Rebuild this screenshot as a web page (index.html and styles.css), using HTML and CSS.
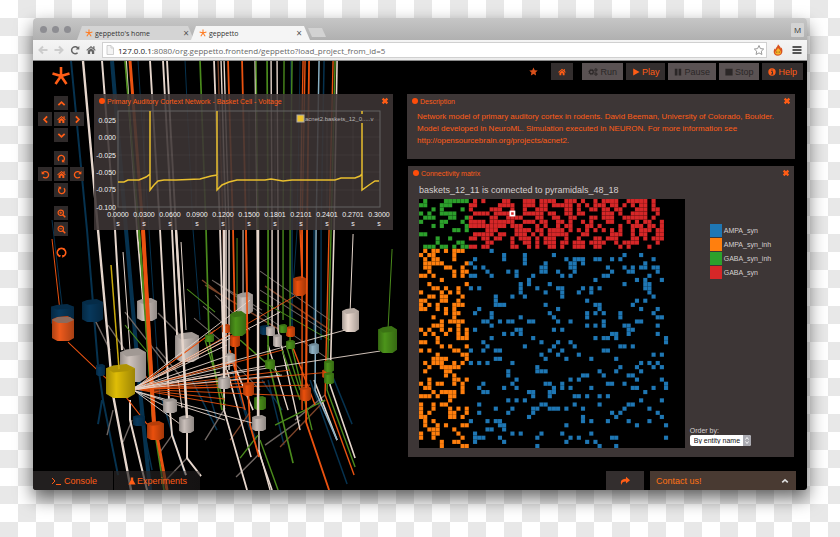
FILE: index.html
```html
<!DOCTYPE html>
<html lang="en">
<head>
<meta charset="utf-8">
<title>geppetto</title>
<link rel="stylesheet" href="styles.css">
</head>
<body>
<svg class="defs" aria-hidden="true">
  <defs>
    <linearGradient id="shade" x1="0" x2="1" y1="0" y2="0">
      <stop offset="0" stop-color="#000" stop-opacity=".28"/>
      <stop offset=".35" stop-color="#000" stop-opacity="0"/>
      <stop offset="1" stop-color="#000" stop-opacity=".3"/>
    </linearGradient>
    <symbol id="soma" viewBox="0 0 20 24" preserveAspectRatio="none">
      <path d="M0 3V21L5 24H15L20 21V3Z" fill="currentColor"/>
      <path d="M0 3V21L5 24H15L20 21V3Z" fill="url(#shade)"/>
      <path d="M0 3L5 1L14 0L20 3L15 5L5 6Z" fill="currentColor"/>
      <path d="M0 3L5 1L14 0L20 3L15 5L5 6Z" fill="#000" opacity=".22"/>
    </symbol>
    <symbol id="aster" viewBox="0 0 20 20">
      <path d="M10 10V1M10 10L1.500 7.500M10 10L18.500 7.500M10 10L4.500 18M10 10L15.500 18" stroke="currentColor" stroke-width="2.600" fill="none"/>
    </symbol>
    <symbol id="up" viewBox="0 0 10 10"><path d="M1.500 6.800L5 3.500L8.500 6.800" class="stroke"/></symbol>
    <symbol id="down" viewBox="0 0 10 10"><path d="M1.500 3.200L5 6.500L8.500 3.200" class="stroke"/></symbol>
    <symbol id="left" viewBox="0 0 10 10"><path d="M6.800 1.500L3.500 5L6.800 8.500" class="stroke"/></symbol>
    <symbol id="right" viewBox="0 0 10 10"><path d="M3.200 1.500L6.500 5L3.200 8.500" class="stroke"/></symbol>
    <symbol id="home" viewBox="0 0 10 10"><path d="M5 1L9.700 5L9 5.800L5 2.500L1 5.800L.3 5Z M7.200 1.300H8.500V4L7.200 2.800Z M1.800 5.800L5 3.200L8.200 5.800V9H5.900V6.500H4.100V9H1.800Z" fill="currentColor"/></symbol>
    <symbol id="turn" viewBox="0 0 10 10"><path d="M7.600 7.700A3.500 3.500 0 1 1 8 3.300" fill="none" stroke="currentColor" stroke-width="1.500"/><path d="M9.300 1V4.600H5.700Z" fill="currentColor"/></symbol>
    <symbol id="zin" viewBox="0 0 10 10"><circle cx="4.200" cy="4.200" r="3" fill="none" stroke="currentColor" stroke-width="1.300"/><path d="M6.400 6.400L9.200 9.200" stroke="currentColor" stroke-width="1.700"/><path d="M2.600 4.200H5.800M4.200 2.600V5.800" stroke="currentColor" stroke-width=".9"/></symbol>
    <symbol id="zout" viewBox="0 0 10 10"><circle cx="4.200" cy="4.200" r="3" fill="none" stroke="currentColor" stroke-width="1.300"/><path d="M6.400 6.400L9.200 9.200" stroke="currentColor" stroke-width="1.700"/><path d="M2.600 4.200H5.800" stroke="currentColor" stroke-width=".9"/></symbol>
    <symbol id="cross" viewBox="0 0 10 10"><path d="M2 2L8 8M8 2L2 8" stroke="currentColor" stroke-width="2.800"/></symbol>
    <symbol id="star" viewBox="0 0 10 10"><path d="M5 .5L6.400 3.600L9.700 4L7.300 6.200L7.900 9.500L5 7.900L2.100 9.500L2.700 6.200L.3 4L3.600 3.600Z"/></symbol>
    <symbol id="gears" viewBox="0 0 12 10">
      <circle cx="4" cy="5" r="2.300" fill="none" stroke="currentColor" stroke-width="1.500"/>
      <circle cx="4" cy="5" r="3.400" fill="none" stroke="currentColor" stroke-width="1" stroke-dasharray="1.300 1.370"/>
      <circle cx="9.600" cy="2.400" r="1.200" fill="none" stroke="currentColor" stroke-width="1.100"/>
      <circle cx="9.600" cy="7.600" r="1.200" fill="none" stroke="currentColor" stroke-width="1.100"/>
      <circle cx="9.600" cy="2.400" r="2" fill="none" stroke="currentColor" stroke-width=".7" stroke-dasharray=".8 .77"/>
      <circle cx="9.600" cy="7.600" r="2" fill="none" stroke="currentColor" stroke-width=".7" stroke-dasharray=".8 .77"/>
    </symbol>
    <symbol id="github" viewBox="0 0 12 12"><path d="M4.400 10.400A4.600 4.600 0 1 1 7.600 10.400V8.600" fill="none" stroke="currentColor" stroke-width="1.700"/><path d="M4.400 10.400V8.600M4.400 9.400H3.200L2.200 8" fill="none" stroke="currentColor" stroke-width="1.200"/><path d="M2.300 4.400V1.300L4.800 2.500ZM9.700 4.400V1.300L7.200 2.500Z" fill="currentColor"/></symbol>
  </defs>
</svg>

<div class="window">
  <header class="titlebar">
    <div class="lights"><i></i><i></i><i></i></div>
    <div class="tab"><svg><use href="#aster"/></svg><span>geppetto's home</span><button aria-label="Close tab">×</button></div>
    <div class="tab active"><svg><use href="#aster"/></svg><span>geppetto</span><button aria-label="Close tab">×</button></div>
    <button class="newtab" aria-label="New tab"></button>
    <button class="profile">M</button>
  </header>
  <nav class="toolbar">
    <button class="dim" aria-label="Back"><svg viewBox="0 0 10 10"><path d="M9.500 5H1.500M5 1.500L1.500 5L5 8.500" class="stroke"/></svg></button>
    <button class="dim" aria-label="Forward"><svg viewBox="0 0 10 10"><path d="M.5 5H8.500M5 1.500L8.500 5L5 8.500" class="stroke"/></svg></button>
    <button aria-label="Reload"><svg><use href="#turn"/></svg></button>
    <button aria-label="Home"><svg><use href="#home"/></svg></button>
    <div class="omnibox">
      <svg class="page" viewBox="0 0 8 10"><path d="M1 .5H5L7.500 3V9.500H1ZM5 .5V3H7.500" fill="#f4f4f4" stroke="#c4c4c4" stroke-width=".8"/></svg>
      <p><b>127.0.0.1</b>:8080/org.geppetto.frontend/geppetto?load_project_from_id=5</p>
      <svg class="mark"><use href="#star"/></svg>
    </div>
    <svg class="flame" viewBox="0 0 10 12"><path d="M5 .3C6 2 8 3 7.800 4.500L8.600 3.600C10.300 7 9.500 11.500 5 11.700C.5 11.500-.2 7.500 1.600 4.500L2.400 5.500C2.800 3.500 4.800 2.500 5 .3Z" fill="#d9521e"/><path d="M5 4C7 6 8.300 7 7.800 9C7.300 11 2.700 11 2.200 9C1.900 7.300 4 6.500 5 4Z" fill="#f7b52c"/><circle cx="3.800" cy="8" r=".6" fill="#503010"/><circle cx="6.200" cy="8" r=".6" fill="#503010"/></svg>
    <button class="menu" aria-label="Menu"><svg viewBox="0 0 10 10"><path d="M.5 2H9.500M.5 5H9.500M.5 8H9.500" stroke="#555" stroke-width="1.800"/></svg></button>
  </nav>

  <main class="app">
    <svg class="scene" viewBox="33 61 774 429" preserveAspectRatio="xMinYMin slice" aria-hidden="true">
      <g class="blue">
        <path d="M71 61L87 230L98 365L103 400L118 475M102 400L98 424" stroke-width="2"/>
        <path d="M112 61L126 230L139 380L150 490" stroke-width="4"/>
        <path d="M138 61L149 230L160 400M185 61L193 230L200 320M52 220L62 305M300 61L297 230L290 330"/>
        <path d="M162 400L185 475M205 380L217 420M140 410L152 470M232 370L250 430M268 380L284 445M310 380L347 484M262 380L282 410M330 370L352 424M314 230V330M192 380L217 430" stroke-width="1.500"/>
        <path d="M291 61L292 230V330M324 61L321 230V340M234 378L256 440" stroke-width="1.500"/>
      </g>
      <g class="grey">
        <path d="M93 316L110 350M108 325L125 350M125 312L170 370M158 313L180 335M156 347L182 378M113 410L107 435M132 420L123 442M225 408L205 440M258 455L236 477M172 435L160 452M188 457L166 480M325 395L295 420M300 420L265 445" stroke-width="1.400"/>
        <path d="M194 318L220 340M203 306L225 325M212 280L262 310M260 271L330 320M260 290L328 333M222 350L260 390M215 295L250 330M212 280L330 360"/>
      </g>
      <g class="brown"><path d="M218 61L223 230L226 380M265 286L330 330M202 280L225 298M205 285L280 330M230 440L250 412M280 447L325 400" stroke-width="1.400"/></g>
      <g class="white">
        <path d="M83 61L98 230L113 395L131 490" stroke-width="2.400"/>
        <path d="M102 61L115 230L122 350M130 400V420L147 490" stroke-width="2"/>
        <path d="M126 61L137 230L143 300M214 61L220 230L224 380V410L247 490" stroke-width="1.800"/>
        <path d="M150 61L160 230L169 400L172 435L186 475M163 61L172 230L177 335M167 61L176 230L187 420V458L201 476" stroke-width="1.900"/>
        <path d="M221 61L226 230V370M224 61L229 230V370M271 61L272 230V330M277 61L278 230V330L300 430M268 345L288 410M255 61L257 230L259 450L270 490" stroke-width="1.400"/>
        <path d="M337 61L334 230L330 385L355 458M227 370L251 457M232 360L253 410M258 450L272 490M314 380L337 440" stroke-width="1.600"/>
        <path d="M123 252L130 350M181 242L186 330M353 234L350 312M243 230V295M178 380L182 408"/>
      </g>
      <g class="green">
        <path d="M125 61L139 230L153 420L164 490M200 61L206 230L209 340L222 410M267 61L268 230V360L293 463" stroke-width="1.700"/>
        <path d="M256 61L258 230V350M284 61L283 230V320M292 61L290 230V340L312 430M335 61L331 230L327 390L355 467M260 440L278 490M240 340L280 375M205 340L225 405M286 345L300 390M325 400L275 425M258 435L240 458M282 350L300 400" stroke-width="1.400"/>
        <path d="M237 238V315M392 249L388 328M187 289L215 312M125 325L150 355M260 300L330 340"/>
      </g>
      <g class="orange">
        <path d="M130 61L143 230L154 420L167 490" stroke-width="3"/>
        <path d="M228 61L233 230L236 380M242 61L246 230L248 390L250 425L259 457M309 61L307 230L306 422L329 490" stroke-width="1.800"/>
        <path d="M303 61L300 230L302 280M305 61L302 230V410M333 61L329 230L325 395L354 475M290 340L315 405M230 350L245 410" stroke-width="1.400"/>
        <path d="M52 239L61 320M68 342L108 380M126 397L147 424M136 362L154 388"/>
      </g>
      <path class="ltblue" d="M319 61L316 230L315 390L337 440" stroke-width="1.500"/>

      <g color="#07385c">
        <use href="#soma" x="51" y="304" width="23" height="22"/><use href="#soma" x="82" y="299" width="21" height="23"/>
        <use href="#soma" x="96" y="364" width="9" height="12"/><use href="#soma" x="133" y="415" width="12" height="11"/>
        <use href="#soma" x="260" y="325" width="10" height="10"/>
      </g>
      <use href="#soma" x="52" y="316" width="22" height="25" color="#ee5a1c"/><path d="M52 320L58 317H70L74 320L67 323H58Z" fill="#8c6a5c"/>
      <g color="#cfc4be">
        <use href="#soma" x="137" y="298" width="20" height="23"/><use href="#soma" x="120" y="348" width="26" height="34"/>
        <use href="#soma" x="175" y="332" width="24" height="30"/><use href="#soma" x="237" y="292" width="16" height="22"/>
        <use href="#soma" x="266" y="326" width="9" height="10"/><use href="#soma" x="273" y="334" width="9" height="13"/>
        <use href="#soma" x="225" y="353" width="10" height="11"/>
        <use href="#soma" x="342" y="308" width="17" height="24" color="#eeddd2"/>
      </g>
      <path class="green" d="M139 230L153 420" stroke-width="2"/>
      <path class="orange" d="M143 230L154 425" stroke-width="4"/>
      <g class="orange" stroke-width=".9">
        <path d="M135 389L224 324M135 389L222 342M135 389L295 296M135 389L228 362M135 389L235 372M135 389L245 387M135 389L265 382M135 389L300 396M135 389L290 370M135 389L244 408M135 389L225 399M135 389L330 372M135 389L215 330M135 389L310 385M135 389L282 350"/>
      </g>
      <g class="white" stroke-width=".9">
        <path d="M135 387L230 335M135 387L227 345M135 388L227 356M135 388L345 330M135 388L380 351M135 389L282 375M135 390L270 365M135 391L225 420M135 391L260 425M135 391L180 424M135 391L165 406M135 388L280 312M135 388L250 300M135 389L220 372M135 389L233 365"/>
      </g>
      <use href="#soma" x="106" y="364" width="29" height="34" color="#dfbd06"/>
      <path class="gold" d="M111 265L119 369" stroke-width="1.500"/>
      <g color="#ea4f0c">
        <use href="#soma" x="147" y="421" width="17" height="19"/><use href="#soma" x="293" y="276" width="13" height="20"/>
        <use href="#soma" x="230" y="334" width="10" height="13"/><use href="#soma" x="243" y="382" width="11" height="14"/>
        <use href="#soma" x="300" y="386" width="11" height="15"/><use href="#soma" x="286" y="326" width="9" height="11"/>
        <use href="#soma" x="222" y="324" width="8" height="9"/><use href="#soma" x="322" y="369" width="9" height="9"/>
      </g>
      <g color="#4c941a">
        <use href="#soma" x="230" y="311" width="16" height="25"/><use href="#soma" x="378" y="326" width="19" height="27"/>
        <use href="#soma" x="265" y="359" width="10" height="10"/><use href="#soma" x="324" y="360" width="10" height="12"/>
        <use href="#soma" x="324" y="372" width="10" height="12"/><use href="#soma" x="254" y="396" width="12" height="14"/>
        <use href="#soma" x="279" y="324" width="8" height="9"/><use href="#soma" x="205" y="334" width="9" height="8"/>
        <use href="#soma" x="286" y="340" width="9" height="9"/>
      </g>
      <g color="#c9bfba">
        <use href="#soma" x="163" y="398" width="14" height="15"/><use href="#soma" x="179" y="415" width="15" height="18"/>
        <use href="#soma" x="218" y="376" width="12" height="13"/><use href="#soma" x="252" y="415" width="14" height="16"/>
        <use href="#soma" x="309" y="343" width="10" height="11" color="#8fb2c4"/>
      </g>
      <path class="white" d="M258 230V416M224 230V378M176 230L187 418" stroke-width="2.400"/>
      <path class="orange" d="M246 230L248 383M307 230L306 388M302 230V278" stroke-width="1.600"/>
    </svg>

    <div class="topbar">
      <svg class="logo"><use href="#aster"/></svg>
      <div class="actions">
        <svg class="fav"><use href="#star"/></svg>
        <button class="btn homebtn" aria-label="Home"><svg><use href="#home"/></svg></button>
        <button class="btn off"><svg class="wide"><use href="#gears"/></svg>Run</button>
        <button class="btn"><svg viewBox="0 0 10 10"><path d="M1.500 .5L9.500 5L1.500 9.500Z" fill="currentColor"/></svg>Play</button>
        <button class="btn off"><svg viewBox="0 0 10 10"><path d="M1 1H4.300V9.500H1ZM5.800 1H9V9.500H5.800Z" fill="currentColor"/></svg>Pause</button>
        <button class="btn off"><svg viewBox="0 0 10 10"><path d="M.5 .8H9.500V9.500H.5Z" fill="currentColor"/></svg>Stop</button>
        <button class="btn"><svg viewBox="0 0 10 10"><circle cx="5" cy="5" r="4.600" fill="currentColor"/><path d="M4 4.300H5.600V7.500M3.800 7.600H6.500M4.300 2.500H5.700" stroke="#332e2e" stroke-width="1.200" fill="none"/></svg>Help</button>
      </div>
    </div>

    <div class="workspace">
      <aside class="rail">
        <div class="pad">
          <button class="n" aria-label="Pan up"><svg><use href="#up"/></svg></button>
          <button class="w" aria-label="Pan left"><svg><use href="#left"/></svg></button>
          <button class="c" aria-label="Pan home"><svg><use href="#home"/></svg></button>
          <button class="e" aria-label="Pan right"><svg><use href="#right"/></svg></button>
          <button class="s" aria-label="Pan down"><svg><use href="#down"/></svg></button>
        </div>
        <div class="pad">
          <button class="n" aria-label="Rotate up"><svg class="q1"><use href="#turn"/></svg></button>
          <button class="w" aria-label="Rotate left"><svg class="flip"><use href="#turn"/></svg></button>
          <button class="c" aria-label="Rotate home"><svg><use href="#home"/></svg></button>
          <button class="e" aria-label="Rotate right"><svg><use href="#turn"/></svg></button>
          <button class="s" aria-label="Rotate down"><svg class="q3"><use href="#turn"/></svg></button>
        </div>
        <div class="pad">
          <button class="n" aria-label="Zoom in"><svg><use href="#zin"/></svg></button>
          <button class="c" aria-label="Zoom out"><svg><use href="#zout"/></svg></button>
        </div>
        <a class="github" href="#source" aria-label="Source code"><svg><use href="#github"/></svg></a>
      </aside>

      <section class="panel voltage">
        <h2>Primary Auditory Cortext Network - Basket Cell - Voltage<button aria-label="Close"><svg><use href="#cross"/></svg></button></h2>
        <svg class="chart" viewBox="94 108 299 122" role="img" aria-label="Membrane voltage over time">
          <g class="gridlines"><path d="M118 120H380M118 137H380M118 155H380M118 172H380M118 190H380M144 111V207M170 111V207M196 111V207M223 111V207M249 111V207M275 111V207M301 111V207M327 111V207M353 111V207"/></g>
          <rect x="118" y="111" width="262" height="96" class="frame"/>
          <path class="trace" d="M118 182H124L128 180H139L146 177L150 174V111M150 174V190L154 185L158 181L164 180H176L200 179L211 176L217 175V111M217 173V190L222 185L229 182L237 180H265L271 179L283 181L292 180H335L341 178H355L360 176L362 174V123M362 111V114M362 174V190L369 185L375 181H379"/>
          <g class="yl">
            <text x="116" y="123">0.025</text><text x="116" y="140">0.000</text><text x="116" y="158">-0.025</text>
            <text x="116" y="175">-0.050</text><text x="116" y="192">-0.075</text><text x="116" y="210">-0.100</text>
          </g>
          <g class="xl">
            <text x="118" y="217">0.0000</text><text x="144" y="217">0.0300</text><text x="170" y="217">0.0600</text><text x="197" y="217">0.0900</text><text x="223" y="217">0.1200</text><text x="249" y="217">0.1500</text><text x="275" y="217">0.1801</text><text x="301" y="217">0.2101</text><text x="327" y="217">0.2401</text><text x="353" y="217">0.2701</text><text x="379" y="217">0.3000</text>
            <text x="118" y="226">s</text><text x="144" y="226">s</text><text x="170" y="226">s</text><text x="197" y="226">s</text><text x="223" y="226">s</text><text x="249" y="226">s</text><text x="275" y="226">s</text><text x="301" y="226">s</text><text x="327" y="226">s</text><text x="353" y="226">s</text><text x="379" y="226">s</text>
          </g>
          <rect x="297" y="115" width="7" height="7" fill="#f0c32c" stroke="#aaa"/>
          <text x="305" y="121" class="key">acnet2.baskets_12_0.....v</text>
        </svg>
      </section>

      <div class="column">
        <section class="panel description">
          <h2>Description<button aria-label="Close"><svg><use href="#cross"/></svg></button></h2>
          <p>Network model of primary auditory cortex in rodents. David Beeman, University of Colorado, Boulder.<br>Model developed in NeuroML. Simulation executed in NEURON. For more information see<br>http://opensourcebrain.org/projects/acnet2.</p>
        </section>
        <section class="panel connectivity">
          <h2>Connectivity matrix<button aria-label="Close"><svg><use href="#cross"/></svg></button></h2>
          <p>baskets_12_11 is connected to pyramidals_48_18</p>
          <div class="split">
            <svg class="matrix" id="matrix" viewBox="0 0 64 60" role="img" aria-label="Connectivity matrix"></svg>
            <div class="side">
              <ul>
                <li><i class="k1"></i>AMPA_syn</li>
                <li><i class="k2"></i>AMPA_syn_inh</li>
                <li><i class="k3"></i>GABA_syn_inh</li>
                <li><i class="k4"></i>GABA_syn</li>
              </ul>
              <div class="order">
                <label for="order">Order by:</label>
                <div class="pick">
                  <select id="order"><option>By entity name</option></select>
                  <svg viewBox="0 0 8 11"><path d="M0 0H6Q8 0 8 2V9Q8 11 6 11H0Z" fill="#a9a9b0"/><path d="M2.500 4.500L4 2.500L5.500 4.500M2.500 6.500L4 8.500L5.500 6.500" fill="none" stroke="#fff" stroke-width=".9"/></svg>
                </div>
              </div>
            </div>
          </div>
        </section>
      </div>
    </div>

    <footer class="dock">
      <button class="console"><svg viewBox="0 0 10 10"><path d="M1 2L4 5L1 8M5 8.500H10" fill="none" stroke="currentColor"/></svg>Console</button>
      <button class="experiments"><svg viewBox="0 0 10 10"><path d="M3.500 .5H6.500V4L9.500 9.500H.5L3.500 4Z" fill="currentColor"/></svg>Experiments</button>
      <button class="share" aria-label="Share"><svg viewBox="0 0 10 10"><path d="M6 .8L10 4.200L6 7.600V5.600C3.500 5.500 2 6 1.500 9C-.5 5 2 2.800 6 2.800Z" fill="currentColor"/></svg></button>
      <button class="contact">Contact us!<svg><use href="#up"/></svg></button>
    </footer>
  </main>
</div>
<script src="matrix.js"></script>
</body>
</html>
```
FILE: styles.css
```css
* { box-sizing: border-box; }

body {
  margin: 0;
  min-height: 100vh;
  padding: 18px 33px 47px;
  font-family: "Liberation Sans", Arial, sans-serif;
  font-size: 8px;
  background: repeating-conic-gradient(#e8e8e8 0 25%, #fff 0 50%) 0 0 / 36px 36px;
}

h2, p, ul { margin: 0; padding: 0; font-weight: normal; }
button { margin: 0; padding: 0; border: 0; background: none; color: inherit; font: inherit; }
svg { display: block; width: 10px; height: 10px; flex: none; }
.defs { position: absolute; width: 0; height: 0; }
.stroke { fill: none; stroke: currentColor; stroke-width: 2; }

.window {
  border-radius: 4px 4px 3px 3px;
  overflow: hidden;
  box-shadow: 0 8px 18px rgba(0, 0, 0, .6);
}

/* browser chrome */
.titlebar {
  display: flex;
  align-items: flex-end;
  height: 22px;
  padding: 0 3px 0 7px;
  background: linear-gradient(#c6c6c6, #b0b0b0);
  font-family: "Open Sans", sans-serif;
  font-size: 7px;
  color: #333;
}
.lights { display: flex; gap: 5px; width: 37px; height: 22px; align-items: center; }
.lights i { width: 7px; height: 7px; border-radius: 50%; background: #8d8d92; }
.tab {
  display: flex;
  align-items: center;
  gap: 2px;
  width: 117px;
  height: 14px;
  margin-right: -3px;
  padding: 0 5px 0 8px;
  background: #d4d4d4;
  clip-path: polygon(5px 0, calc(100% - 6px) 0, 100% 100%, 0 100%);
}
.tab.active { background: #f5f5f5; width: 119px; padding-right: 8px; }
.tab svg { width: 8px; height: 8px; color: #ff7a1f; }
.tab button { margin-left: auto; font-size: 10px; line-height: 10px; color: #555; }
.newtab {
  width: 18px;
  height: 9px;
  margin: 0 0 3px 1px;
  background: #d2d2d2;
  clip-path: polygon(0 0, 14px 0, 100% 100%, 4px 100%);
}
.profile { width: 13px; height: 14px; margin: 0 0 3px auto; background: #d3d3d3; border-radius: 1px; font-size: 8px; line-height: 14px; }

.toolbar {
  display: flex;
  align-items: center;
  gap: 6px;
  height: 21px;
  padding: 0 5px;
  background: linear-gradient(#f5f5f5, #ebebeb);
  border-bottom: 1px solid #8a8a8a;
  color: #666;
}
.toolbar .dim { color: #ccc; }
.omnibox {
  flex: 1;
  display: flex;
  align-items: center;
  gap: 4px;
  height: 16px;
  padding: 0 2px 0 3px;
  background: #fff;
  border: 1px solid #d0d0d0;
  font-family: "Open Sans", sans-serif;
  font-size: 8px;
  color: #666;
}
.omnibox p { flex: 1; }
.omnibox b { color: #222; font-weight: normal; }
.page { width: 8px; }
.mark { fill: #fff; stroke: #999; stroke-width: 1; }
.toolbar .flame { width: 10px; height: 12px; }
.menu { margin: 0 0 0 3px; }

/* application */
.app {
  position: relative;
  background: #000;
  color: #ff5d16;
}
.scene { position: absolute; inset: 0; width: 100%; height: 100%; }
.scene path { stroke-linejoin: round; }
.scene .blue, .scene .grey, .scene .brown, .scene .white, .scene .green, .scene .orange, .scene .ltblue, .scene .gold { fill: none; }
.scene .blue { stroke: #06324f; }
.scene .grey { stroke: #6f6662; }
.scene .brown { stroke: #7a4228; }
.scene .white { stroke: #e6d6cc; }
.scene .green { stroke: #4a8a1c; }
.scene .orange { stroke: #ea5210; }
.scene .ltblue { stroke: #8ab0c4; }
.scene .gold { stroke: #c8a90c; }

.topbar, .workspace, .dock { position: relative; display: flex; }
.topbar { height: 33px; padding: 2px 4px 0 18px; justify-content: space-between; align-items: flex-start; }
.logo { width: 20px; height: 20px; margin-top: 3px; }
.actions { display: flex; align-items: center; gap: 3px; }
.fav { width: 9px; height: 9px; margin-right: 10px; fill: #d9501a; }
.btn {
  display: flex;
  align-items: center;
  gap: 2px;
  height: 17px;
  padding: 0 6px;
  background: #332e2e;
  font-size: 9px;
}
.btn svg { width: 8px; height: 8px; }
.btn .wide { width: 10px; }
.btn.off { background: #5a5253; color: #2b2727; }
.homebtn { padding: 0 7px; margin-right: 6px; }

.workspace { align-items: flex-start; padding-right: 12px; }
.rail { flex: none; width: 61px; padding: 2px 0 0 5px; }
.pad {
  display: grid;
  grid-template: ". n ." 14px "w c e" 14px ". s ." auto / 14px 14px 14px;
  gap: 2px;
  margin-bottom: 9px;
}
.pad button { height: 14px; display: grid; place-items: center; background: #2f2a2a; }
.pad svg { width: 9px; height: 9px; }
.n { grid-area: n; } .w { grid-area: w; } .c { grid-area: c; } .e { grid-area: e; } .s { grid-area: s; }
.flip { transform: scaleX(-1); }
.q1 { transform: rotate(90deg); }
.q3 { transform: rotate(-90deg); }
.github { display: block; width: 46px; color: inherit; }
.github svg { width: 11px; height: 11px; margin: 0 auto; }

.panel { background: #3d3636; }
.panel h2 {
  display: flex;
  align-items: center;
  gap: 2px;
  height: 14px;
  padding: 0 4px 0 5px;
  font-size: 7px;
}
.panel h2::before { content: ""; width: 6px; height: 6px; border-radius: 50%; background: #ff4d0a; }
.panel h2 button { margin-left: auto; }
.panel h2 svg { width: 8px; height: 8px; }

.voltage { flex: 299; background: rgba(61, 54, 54, .88); }
.chart { width: 100%; height: auto; font-size: 7px; }
.gridlines { stroke: #fff; stroke-opacity: .05; stroke-width: 1; fill: none; }
.frame { fill: none; stroke: #626262; }
.trace { fill: none; stroke: #e9bf2e; stroke-width: 1.5; }
.chart text { fill: #f2f2f2; }
.yl { text-anchor: end; }
.xl { text-anchor: middle; }
.chart .key { fill: #b8b4b4; font-size: 6px; }

.column { flex: 388; display: flex; flex-direction: column; gap: 7px; margin-left: 14px; }
.description { padding-bottom: 12px; }
.description p { padding: 3px 10px 0; line-height: 12px; }
.connectivity { margin: 0 1px; padding-bottom: 9px; }
.connectivity p { padding: 4px 11px 0; height: 19px; font-size: 9px; line-height: 12px; color: #d5d0d0; }
.split { display: flex; padding-left: 11px; }
.matrix { flex: 265; width: 0; height: auto; background: #000; }
.matrix rect { stroke: #000; stroke-opacity: .1; stroke-width: .1; }
.matrix .picked { fill: none; stroke: #fff; stroke-opacity: 1; stroke-width: .4; }
.side {
  flex: 104;
  display: flex;
  flex-direction: column;
  justify-content: space-between;
  padding: 24px 0 2px 5px;
  color: #d5d0d0;
}
.side ul { padding-left: 20px; list-style: none; font-size: 7px; }
.side li { display: flex; align-items: center; gap: 2px; height: 14px; }
.side i { width: 12px; height: 13px; }
.k1 { background: #1f77b4; }
.k2 { background: #ff7f0e; }
.k3 { background: #2ca02c; }
.k4 { background: #d62728; }
.order { display: grid; gap: 1px; justify-items: start; font-size: 7px; }
.pick { position: relative; }
.pick select {
  appearance: none;
  width: 61px;
  height: 11px;
  padding: 0 4px;
  border: 0;
  border-radius: 2px;
  background: #fff;
  color: #111;
  font: 7px "Liberation Sans", Arial, sans-serif;
}
.pick svg { position: absolute; right: 0; top: 0; width: 8px; height: 11px; pointer-events: none; }

.dock { margin-top: 14px; padding-right: 11px; height: 19px; font-size: 9px; }
.dock button { display: flex; align-items: center; }
.console { width: 81px; padding-left: 18px; gap: 3px; background: rgba(40, 36, 36, .85); border-right: 1px solid #000; }
.experiments { width: 86px; padding-left: 14px; gap: 1px; background: linear-gradient(90deg, rgba(40, 36, 36, .75), rgba(40, 36, 36, .5)); }
.dock .experiments svg, .dock .contact svg { width: 8px; height: 8px; }
.dock .share { width: 38px; margin: 0 6px 0 auto; justify-content: center; background: #332e2e; }
.dock .contact { width: 146px; padding: 0 7px 0 6px; justify-content: space-between; background: #493a32; color: #ff7214; }
.contact svg { color: #ddd; }
```
FILE: matrix.js
```js
// Connected target columns for each source row; "a-b" is an inclusive run.
const rows = `
1 6-11 13 15 20-21 25-27 29-32 35-37 39 42 44-47 50-54 56
0-1 5-7 12-13 19-22 25-27 29-30 32-36 38 40 42-44 46-47 49 51 53-54 56
3 5 10 12 17-19 22 25 28-30 35-36 38 41-42 44-45 47-48 52-54 56-57
0 2 5-8 13-16 18-22 25-29 31-32 35-36 38-39 44-46 48 51-54 57
1-3 7-8 11-12 17-18 21-24 28-29 32-33 36-37 41-42 44-46 49-54 56
0 5-6 10 12-15 17-22 25-27 29-30 33-34 36 39 41 45-46 50 52 54-55 58
3 5 11-20 22-24 28 30 33 35-36 40-41 43 48 51-53 55-56 58
8-9 11 16-18 23-26 28-29 31-34 36 38 40 42 44 46 48 51 53-55 57-58
0-1 13-17 19-20 23-25 27 29 31-35 39-40 46-48 51 53-54 57-58
4 7 12-13 15-16 18-19 22 24-26 28 30-32 35 38 42-43 45-47 51-52 54 56-58
4 9-10 16-17 22 25-26 28 30-32 34-35 37-39 41-44 47 49-52 57
1-3 5-6 8 10-13 15-16 22-23 26 28 31-32 34 37-39 42-43 48 50 55
1 3-4 6 8-10 17
0 2-3 8 20 25 32 49 53
1 3-4 8 13 20 25 35 37-39 42-43 46 48 56
1-5 11-12 25 30 36-37 39 54
1-2 6-7 10 13 15 29-30 36-37 45 49 51 53-54 56-57
2 8 10-11 16 21 23 29-30 33 37 46 50-51 57
0-1 3 8 10 12-13 17 23 27 34 36 44-45 55
5 26 42 52 54 58
2 11 24 26 31 49 54-55
3-4 6 9 12 14 24 28 33-34 39 41 43 54-55
0 5 7 9 24 30 34 38 41 55
2-3 5-6 10 18 22 25 34 56
0-1 5-6 9 18 40 52 54
0 2 4 8-10 18-20 30 42-43 51
0-1 4 6 8 14 33 43 53 57
6 8-9 13 17 31 40 42 44 48 56
3 8 17 24 32 40 48 57-58
5 7-10 15-16 19 21-22 26-27 33 36 44 52-53
3-5 9 17 40 42 44 49-50 57
0 2 5 7 9 11 13 23-24 32 34 50-51
1 3 6 9 11 20 22 24 46-47 50 57
4 9-11 17 27 42 44-45 47 59
0-1 4 15 29 33 36 59
5 7 11 16 25 32 37 48-49 51
0 2 8-9 12 15 18-19 31 34 44-45
4 10-11 29 33 38 56 58
3-6 11 18-19 30 35 41 47
1 3-5 8 10 12 14 16 22 53 55 57
2 5-9 28 48 52 56 58
1 6-7 21 28-30 43 47 53
6 8 21 39-40 44 50-51
2 8-9 11 23 36 38 52 58
0 2 4-5 8 10 15 22 30-31 34 45-46 49 59
1-2 10 14 20 23 32 34 36 41 51-52 56 59
3 5-8 10 15-16 26-27 31-32 54
0-2 4 7-8 27 31 37-38 40 43 45
7 21 23 25 53 58
0 3 5-6 14 29-30 37 43 50-51
0 3 7 9 11 18 22 27-28 31-33 35 39 49 55
0 2 7-8 11 14 21 27 46 48 57
0-1 7-8 10 26 39 47 58
1 3 12 16 18-19 39 41 45 50 55
1 4 6 10-11 19-20 35 52 59
2-4 8 16-17 20
0 3-4 9 13 22 24 29 34 41
0 3 10 13-15 19 28 36 38 46-47 59
5 8-9 13 20 35 40 42
5 10-11 28 43 47`.trim().split("\n");

const svg = document.getElementById("matrix");

function addCell(x, y, fill, className) {
  const cell = document.createElementNS("http://www.w3.org/2000/svg", "rect");
  cell.setAttribute("x", x);
  cell.setAttribute("y", y);
  cell.setAttribute("width", 1);
  cell.setAttribute("height", 1);
  if (fill) cell.setAttribute("fill", fill);
  if (className) cell.setAttribute("class", className);
  svg.appendChild(cell);
}

rows.forEach((row, y) => {
  row.split(" ").forEach((run) => {
    const [from, to = from] = run.split("-").map(Number);
    for (let x = from; x <= to; x++) {
      const fill = y < 12 ? (x < 12 ? "#2ca02c" : "#d62728") : (x < 12 ? "#ff7f0e" : "#1f77b4");
      addCell(x, y, fill);
    }
  });
});
addCell(22, 3, null, "picked");
```
